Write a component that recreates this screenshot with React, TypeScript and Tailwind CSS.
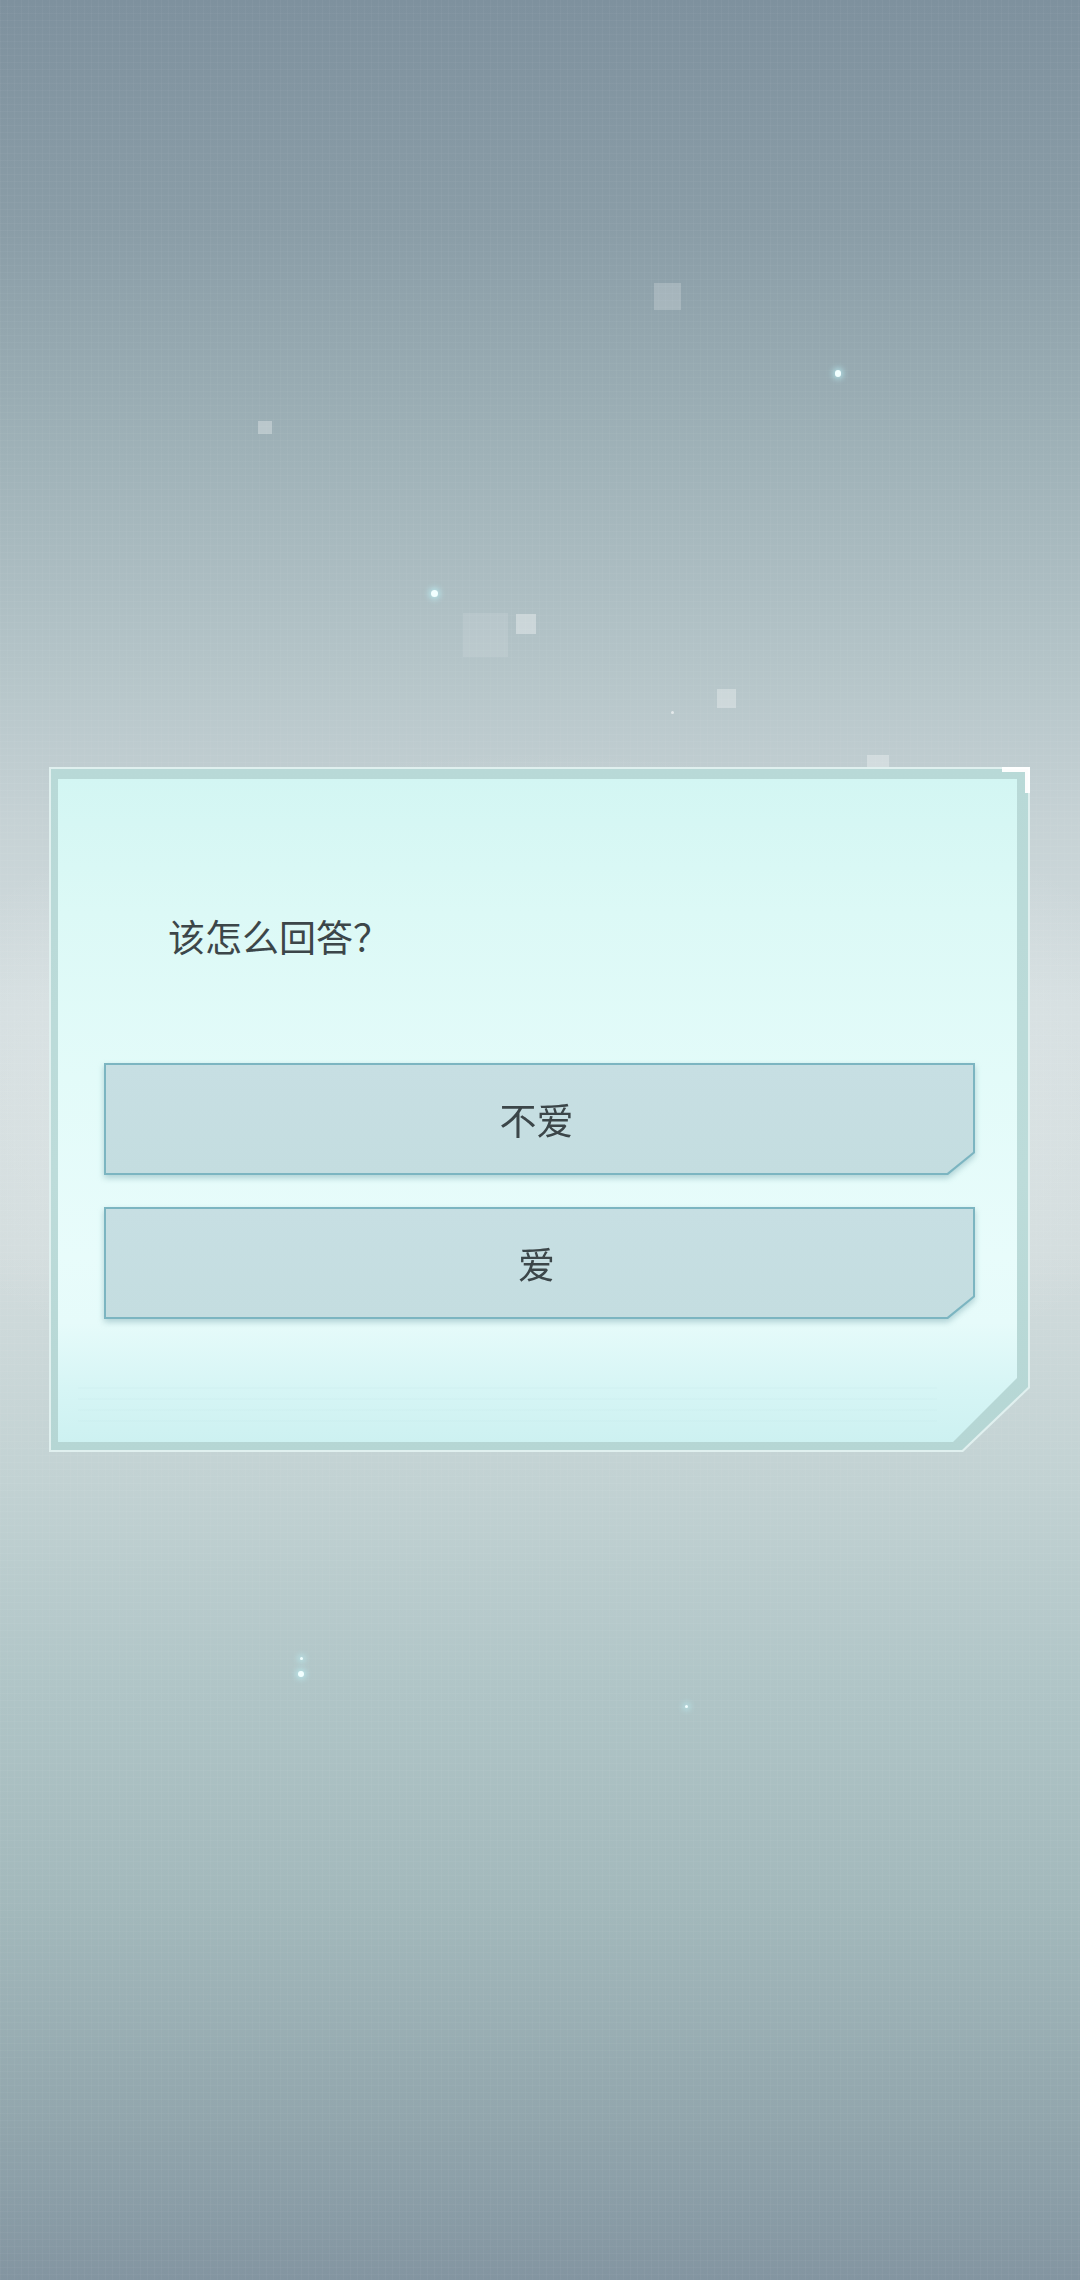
import React from "react";

const cjk = "font-['Noto_Sans_CJK_SC','Noto_Sans',sans-serif]";

function Spark({ className }: { className: string }) {
  return <div className={`absolute rounded-full bg-[#f2ffff] shadow-[0_0_6px_2px_rgba(190,250,255,0.7)] ${className}`} />;
}

function Choice({ label }: { label: string }) {
  return (
    <div className="w-[871px] h-[112px] [filter:drop-shadow(0_3px_3px_rgba(70,130,140,0.35))]">
      <div className="w-full h-full p-[2px] bg-[#7cb5c1] [clip-path:polygon(0_0,100%_0,100%_calc(100%_-_22px),calc(100%_-_27px)_100%,0_100%)]">
        <div className="w-full h-full flex items-center justify-center bg-[linear-gradient(180deg,#c7dfe3,#c4dde0)] [clip-path:polygon(0_0,100%_0,100%_calc(100%_-_21px),calc(100%_-_26px)_100%,0_100%)]">
          <span className={`${cjk} text-[37px] leading-none text-[#3c4649] pr-[6px]`}>{label}</span>
        </div>
      </div>
    </div>
  );
}

export default function App() {
  return (
    <div className="relative w-[1080px] h-[2280px] overflow-hidden bg-[linear-gradient(180deg,#7e919e_0%,#8a9da7_10%,#9fb2b8_20%,#b4c4c8_29%,#c6d2d5_36%,#d3dddf_44%,#d2dcdd_55%,#c2d2d3_65%,#b0c5c7_74%,#a2b8bb_84%,#92a6ad_93%,#8395a1_100%)]">
      {/* soft light halo behind the dialog */}
      <div className="absolute inset-0 bg-[radial-gradient(ellipse_62%_15%_at_50%_48%,rgba(238,242,242,0.85),rgba(238,242,242,0)_100%)]" />
      {/* fine screen grid */}
      <div className="absolute inset-0 opacity-60 bg-[linear-gradient(90deg,rgba(255,255,255,0.06)_1px,transparent_1px),linear-gradient(0deg,rgba(255,255,255,0.05)_1px,transparent_1px)] bg-[size:7px_7px]" />

      {/* floating particles */}
      <div className="absolute left-[654px] top-[283px] w-[27px] h-[27px] bg-white/20" />
      <div className="absolute left-[258px] top-[421px] w-[14px] h-[13px] bg-white/30" />
      <Spark className="left-[835px] top-[370px] w-[6px] h-[7px]" />
      <Spark className="left-[431px] top-[590px] w-[7px] h-[7px]" />
      <div className="absolute left-[463px] top-[613px] w-[45px] h-[44px] bg-white/10" />
      <div className="absolute left-[516px] top-[614px] w-[20px] h-[20px] bg-white/35" />
      <div className="absolute left-[717px] top-[689px] w-[19px] h-[19px] bg-white/30" />
      <div className="absolute left-[671px] top-[711px] w-[3px] h-[3px] rounded-full bg-white/60" />
      <div className="absolute left-[867px] top-[755px] w-[22px] h-[18px] bg-white/30" />
      <Spark className="left-[300px] top-[1657px] w-[3px] h-[3px]" />
      <Spark className="left-[298px] top-[1671px] w-[6px] h-[6px]" />
      <Spark className="left-[685px] top-[1705px] w-[3px] h-[3px]" />

      {/* dialog */}
      <div className="relative pt-[767px] pl-[49px]">
        <div className="relative w-[981px] h-[685px]">
          <div className="w-full h-full p-[2px] bg-[#e0f0ef] [clip-path:polygon(0_0,100%_0,100%_calc(100%_-_64px),calc(100%_-_67px)_100%,0_100%)]">
            <div className="w-full h-full pt-[10px] pl-[7px] pr-[11px] pb-[8px] bg-[linear-gradient(180deg,#b8d9d7,#bddcda_60%,#b5d6d4)] [clip-path:polygon(0_0,100%_0,100%_calc(100%_-_63px),calc(100%_-_66px)_100%,0_100%)]">
              <div className="relative w-full h-full flex flex-col pt-[139px] pl-[46px] pr-[42px] bg-[linear-gradient(180deg,#d3f6f3_0%,#dcf9f6_20%,#e3fbf9_45%,#e8fcfb_72%,#e6fbfa_82%,#d6f5f5_92%,#cdf1f1_100%)] [clip-path:polygon(0_0,100%_0,100%_calc(100%_-_64px),calc(100%_-_64px)_100%,0_100%)]">
                <h1 className={`${cjk} pl-[64px] text-[37px] leading-none font-normal text-[#3c4649]`}>该怎么回答？</h1>
                <div className="mt-[108px] flex flex-col gap-[32px]">
                  <Choice label="不爱" />
                  <Choice label="爱" />
                </div>
                {/* faint scan streaks along the lower edge */}
                <div className="absolute left-[20px] right-[80px] bottom-[14px] h-[50px] opacity-40 bg-[repeating-linear-gradient(180deg,rgba(255,255,255,0)_0px,rgba(255,255,255,0)_9px,rgba(190,225,228,0.6)_10px,rgba(255,255,255,0)_11px)]" />
              </div>
            </div>
          </div>
          {/* corner bracket */}
          <div className="absolute top-0 right-0 w-[28px] h-[26px] border-t-[5px] border-r-[5px] border-white/95" />
        </div>
      </div>
    </div>
  );
}
